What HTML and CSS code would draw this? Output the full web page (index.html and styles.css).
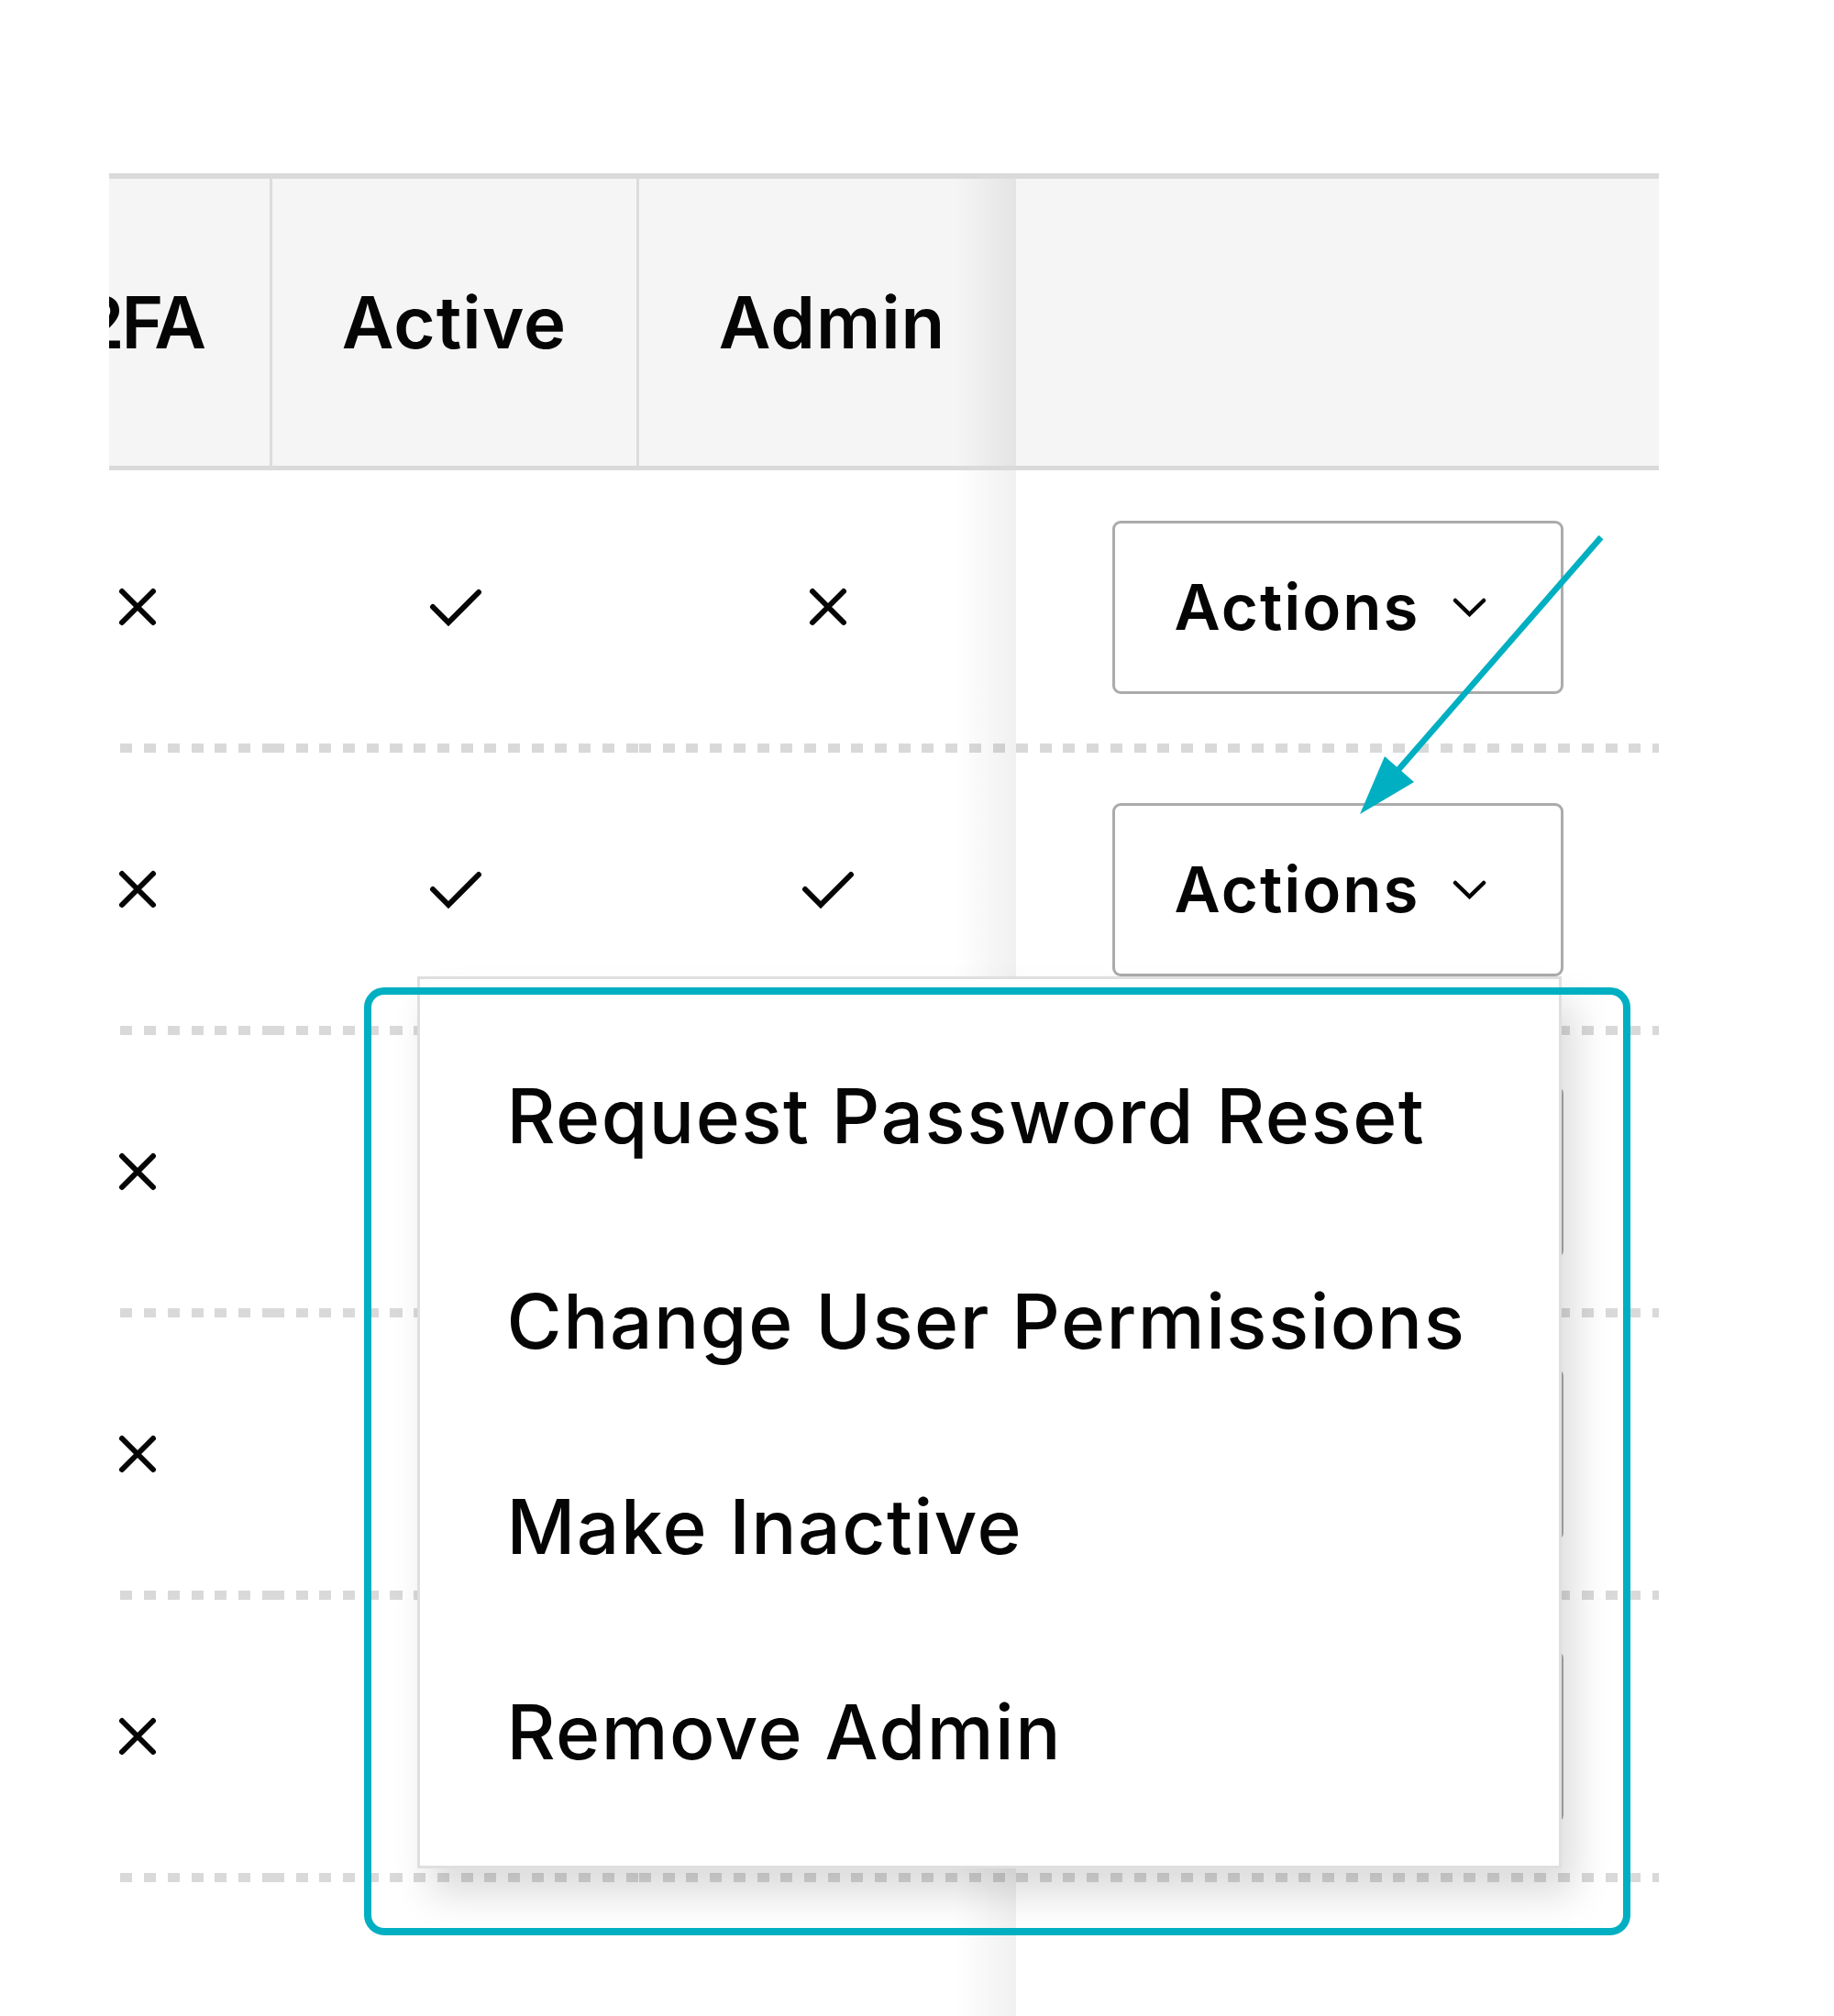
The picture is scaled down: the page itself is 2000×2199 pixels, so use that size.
FILE: index.html
```html
<!DOCTYPE html>
<html lang="en">

<head>
    <meta charset="UTF-8">
    <meta name="viewport" content="width=device-width, initial-scale=1.0">
    <title>Users</title>
    <link rel="stylesheet" href="styles.css">
</head>

<body>
    <div class="page">
        <div class="table-wrap">
            <div class="users-table">
                <!-- header -->
                <div class="head divider first">2FA</div>
                <div class="head divider">Active</div>
                <div class="head shade">Admin</div>
                <div class="head sticky"></div>

                <!-- row 1 -->
                <div class="td"><svg class="icon-x" viewBox="0 0 44 44"><path d="M5 5L39 39M39 5L5 39" /></svg></div>
                <div class="td"><svg class="icon-check" viewBox="0 0 58 41"><path d="M4 20L21 37L54 4" /></svg></div>
                <div class="td shade"><svg class="icon-x" viewBox="0 0 44 44"><path d="M5 5L39 39M39 5L5 39" /></svg></div>
                <div class="td sticky">
                    <button class="actions-btn" type="button">Actions
                        <svg class="chevron" viewBox="0 0 37 21"><path d="M3 3L18.5 18L34 3" /></svg>
                    </button>
                </div>

                <!-- row 2 -->
                <div class="td"><svg class="icon-x" viewBox="0 0 44 44"><path d="M5 5L39 39M39 5L5 39" /></svg></div>
                <div class="td"><svg class="icon-check" viewBox="0 0 58 41"><path d="M4 20L21 37L54 4" /></svg></div>
                <div class="td shade"><svg class="icon-check" viewBox="0 0 58 41"><path d="M4 20L21 37L54 4" /></svg></div>
                <div class="td sticky">
                    <div class="dropdown">
                        <button class="actions-btn" type="button">Actions
                            <svg class="chevron" viewBox="0 0 37 21"><path d="M3 3L18.5 18L34 3" /></svg>
                        </button>
                        <ul class="menu">
                            <li class="menu-item">Request Password Reset</li>
                            <li class="menu-item">Change User Permissions</li>
                            <li class="menu-item">Make Inactive</li>
                            <li class="menu-item">Remove Admin</li>
                        </ul>
                    </div>
                </div>

                <!-- row 3 -->
                <div class="td"><svg class="icon-x" viewBox="0 0 44 44"><path d="M5 5L39 39M39 5L5 39" /></svg></div>
                <div class="td"><svg class="icon-check" viewBox="0 0 58 41"><path d="M4 20L21 37L54 4" /></svg></div>
                <div class="td shade"><svg class="icon-x" viewBox="0 0 44 44"><path d="M5 5L39 39M39 5L5 39" /></svg></div>
                <div class="td sticky">
                    <button class="actions-btn" type="button">Actions
                        <svg class="chevron" viewBox="0 0 37 21"><path d="M3 3L18.5 18L34 3" /></svg>
                    </button>
                </div>

                <!-- row 4 -->
                <div class="td"><svg class="icon-x" viewBox="0 0 44 44"><path d="M5 5L39 39M39 5L5 39" /></svg></div>
                <div class="td"><svg class="icon-check" viewBox="0 0 58 41"><path d="M4 20L21 37L54 4" /></svg></div>
                <div class="td shade"><svg class="icon-x" viewBox="0 0 44 44"><path d="M5 5L39 39M39 5L5 39" /></svg></div>
                <div class="td sticky">
                    <button class="actions-btn" type="button">Actions
                        <svg class="chevron" viewBox="0 0 37 21"><path d="M3 3L18.5 18L34 3" /></svg>
                    </button>
                </div>

                <!-- row 5 -->
                <div class="td"><svg class="icon-x" viewBox="0 0 44 44"><path d="M5 5L39 39M39 5L5 39" /></svg></div>
                <div class="td"><svg class="icon-check" viewBox="0 0 58 41"><path d="M4 20L21 37L54 4" /></svg></div>
                <div class="td shade"><svg class="icon-x" viewBox="0 0 44 44"><path d="M5 5L39 39M39 5L5 39" /></svg></div>
                <div class="td sticky">
                    <button class="actions-btn" type="button">Actions
                        <svg class="chevron" viewBox="0 0 37 21"><path d="M3 3L18.5 18L34 3" /></svg>
                    </button>
                </div>

                <!-- empty space under the rows -->
                <div class="filler"></div>
                <div class="filler"></div>
                <div class="filler shade"></div>
                <div class="filler sticky"></div>
            </div>
        </div>

        <!-- callout drawn over the screenshot -->
        <svg class="callout" viewBox="0 0 2000 2199">
            <rect x="401" y="1081" width="1373" height="1026" rx="18" />
            <line x1="1746" y1="586" x2="1522" y2="843" />
            <polygon points="1483,888 1510,825 1542,853" />
        </svg>
    </div>
</body>

</html>
```

FILE: styles.css
```css
* {
    margin: 0;
    padding: 0;
    box-sizing: border-box;
}

body {
    font-family: Inter, "Noto Sans", sans-serif;
    color: #050505;
    background-color: #fff;
}

.page {
    position: relative;
    height: 2199px;
    padding: 189px 0 0 119px;
    overflow: hidden;
}

/* scrolled table, first column partly out of view */
.table-wrap {
    width: 1690px;
    height: 2010px;
    overflow: hidden;
}

.users-table {
    display: grid;
    grid-template-columns: 294px 400px 411px 701px;
    grid-template-rows: 324px;
    grid-auto-rows: 308px;
    width: 1806px;
    margin-left: -116px;
}

.head {
    display: flex;
    justify-content: center;
    align-items: center;
    background-color: #f5f5f5;
    border-top: 6px solid #dadada;
    border-bottom: 5px solid #dadada;
    font-size: 78px;
    font-weight: 600;
    letter-spacing: 1px;
}

.head.divider {
    border-right: 3px solid #dcdcdc;
}

.head.first {
    padding-left: 12px;
    letter-spacing: -3px;
}

.head.shade {
    padding-left: 10px;
    background-image: linear-gradient(to right, rgba(0, 0, 0, 0) calc(100% - 66px), rgba(0, 0, 0, 0.07));
}

.td {
    display: flex;
    justify-content: center;
    align-items: center;
    padding-bottom: 10px;
    background-image: repeating-linear-gradient(to right, #d9d9d9 0 13px, transparent 13px 25.7px);
    background-size: 100% 10px;
    background-position: 0 100%;
    background-repeat: no-repeat;
}

.td.shade {
    background-image:
        linear-gradient(to right, rgba(0, 0, 0, 0) calc(100% - 66px), rgba(0, 0, 0, 0.06)),
        repeating-linear-gradient(to right, #d9d9d9 0 13px, transparent 13px 25.7px);
    background-size: 100% 100%, 100% 10px;
    background-position: 0 0, 0 100%;
}

.filler.shade {
    background-image: linear-gradient(to right, rgba(0, 0, 0, 0) calc(100% - 66px), rgba(0, 0, 0, 0.06));
}

.icon-x,
.icon-check,
.chevron {
    fill: none;
    stroke: #050505;
    stroke-linecap: round;
}

.icon-x {
    width: 44px;
    height: 44px;
    stroke-width: 6;
}

.icon-check {
    width: 58px;
    height: 41px;
    stroke-width: 6;
}

.actions-btn {
    display: flex;
    justify-content: center;
    align-items: center;
    gap: 36px;
    width: 492px;
    height: 189px;
    padding-right: 15px;
    border: 3px solid #ababab;
    border-radius: 9px;
    background-color: #fff;
    color: #050505;
    font-family: inherit;
    font-size: 69px;
    font-weight: 600;
    letter-spacing: 2px;
    cursor: pointer;
}

.chevron {
    width: 37px;
    height: 21px;
    stroke-width: 4.5;
}

.dropdown {
    position: relative;
}

.menu {
    position: absolute;
    top: 100%;
    right: 2px;
    width: 1248px;
    padding: 38px 0 33px;
    list-style: none;
    background-color: #fff;
    border: 3px solid #dfdfdf;
    box-shadow: 14px 28px 40px rgba(0, 0, 0, 0.14);
    z-index: 5;
}

.menu-item {
    display: flex;
    align-items: center;
    height: 224px;
    padding-left: 95px;
    font-size: 82px;
    font-weight: 500;
    letter-spacing: 1.5px;
}

.callout {
    position: absolute;
    top: 0;
    left: 0;
    width: 2000px;
    height: 2199px;
    pointer-events: none;
    z-index: 10;
}

.callout rect,
.callout line {
    fill: none;
    stroke: #00afc1;
}

.callout rect {
    stroke-width: 8;
}

.callout line {
    stroke-width: 6.5;
}

.callout polygon {
    fill: #00afc1;
}
```
